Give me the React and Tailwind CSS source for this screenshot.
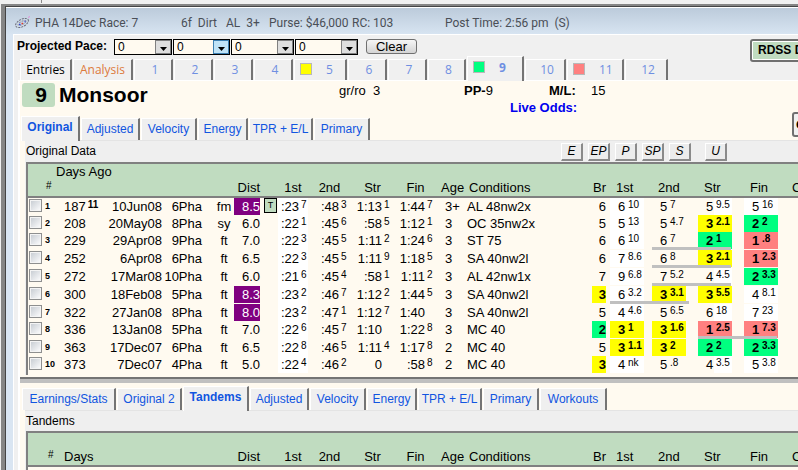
import { clsx } from 'clsx';

const raceTabs = [
  { label: 'Entries', width: 'w-[52px]', text: 'text-black' },
  { label: 'Analysis', width: 'w-[60px]', text: 'text-[#dd7a3c]' },
  { label: '1', width: 'w-[39px]' },
  { label: '2', width: 'w-[39px]' },
  { label: '3', width: 'w-[39px]' },
  { label: '4', width: 'w-[39px]' },
  { label: '5', width: 'w-[53px]', flag: 'bg-[#ffff00]' },
  { label: '6', width: 'w-[39px]' },
  { label: '7', width: 'w-[39px]' },
  { label: '8', width: 'w-[38px]' },
  { label: '9', width: 'w-[57px]', flag: 'bg-[#00ff80]', active: true },
  { label: '10', width: 'w-[41px]' },
  { label: '11', width: 'w-[57px]', flag: 'bg-[#ff8080]' },
  { label: '12', width: 'w-[43px]' }
];

const dataTabs = [
  { label: 'Original', width: 'w-[59px]', active: true },
  { label: 'Adjusted', width: 'w-[59px]' },
  { label: 'Velocity', width: 'w-[56px]' },
  { label: 'Energy', width: 'w-[50px]' },
  { label: 'TPR + E/L', width: 'w-[64px]' },
  { label: 'Primary', width: 'w-[56px]' }
];

const tandemTabs = [
  { label: 'Earnings/Stats', width: 'w-[94px]' },
  { label: 'Original 2', width: 'w-[65px]' },
  { label: 'Tandems', width: 'w-[66px]', active: true },
  { label: 'Adjusted', width: 'w-[59px]' },
  { label: 'Velocity', width: 'w-[56px]' },
  { label: 'Energy', width: 'w-[50px]' },
  { label: 'TPR + E/L', width: 'w-[64px]' },
  { label: 'Primary', width: 'w-[56px]' },
  { label: 'Workouts', width: 'w-[67px]' }
];

// times: [base, tenths]; calls: [position, lengths, colour]
const races = [
  { days: '187', sup: '11', date: '10Jun08', track: '6Pha', surf: 'fm', dist: '8.5', route: true, turf: true,
    times: [[':23', '7'], [':48', '3'], ['1:13', '1'], ['1:44', '7']], age: '3+', cond: 'AL 48nw2x',
    br: ['6'], calls: [['6', '10'], ['5', '7'], ['5', '9.5'], ['5', '16']] },
  { days: '208', date: '20May08', track: '8Pha', surf: 'sy', dist: '6.0', tight: true,
    times: [[':22', '1'], [':45', '6'], [':58', '5'], ['1:12', '1']], age: '3', cond: 'OC 35nw2x',
    br: ['5'], calls: [['5', '13'], ['5', '4.7'], ['3', '2.1', 'yellow'], ['2', '2', 'green']] },
  { days: '229', date: '29Apr08', track: '9Pha', surf: 'ft', dist: '7.0',
    times: [[':22', '3'], [':45', '5'], ['1:11', '2'], ['1:24', '6']], age: '3', cond: 'ST 75',
    br: ['6'], calls: [['6', '10'], ['6', '7'], ['2', '1', 'green'], ['1', '.8', 'red']], bar: 1 },
  { days: '252', date: '6Apr08', track: '6Pha', surf: 'ft', dist: '6.5',
    times: [[':22', '3'], [':45', '5'], ['1:11', '9'], ['1:18', '5']], age: '3', cond: 'SA 40nw2l',
    br: ['6'], calls: [['7', '8.6'], ['6', '8'], ['3', '2.1', 'yellow'], ['1', '2.3', 'red']], bar: 1 },
  { days: '272', date: '17Mar08', track: '10Pha', surf: 'ft', dist: '6.0',
    times: [[':21', '6'], [':45', '4'], [':58', '1'], ['1:11', '2']], age: '3', cond: 'AL 42nw1x',
    br: ['7'], calls: [['9', '6.8'], ['7', '5.2'], ['4', '4.5'], ['2', '3.3', 'green']], bar: 1 },
  { days: '300', date: '18Feb08', track: '5Pha', surf: 'ft', dist: '8.3', route: true,
    times: [[':23', '2'], [':46', '7'], ['1:12', '2'], ['1:44', '5']], age: '3', cond: 'SA 40nw2l',
    br: ['3', 'yellow'], calls: [['6', '3.2'], ['3', '3.1', 'yellow'], ['3', '5.5', 'yellow'], ['4', '8.1']], bar: 0 },
  { days: '322', date: '27Jan08', track: '8Pha', surf: 'ft', dist: '8.0', route: true, tight: true,
    times: [[':23', '2'], [':47', '1'], ['1:12', '7'], ['1:40', '']], age: '3', cond: 'SA 40nw2l',
    br: ['5'], calls: [['4', '4.6'], ['5', '6.5'], ['6', '18'], ['7', '23']] },
  { days: '336', date: '13Jan08', track: '5Pha', surf: 'ft', dist: '7.0',
    times: [[':22', '6'], [':45', '7'], ['1:10', ''], ['1:22', '8']], age: '3', cond: 'MC 40',
    br: ['2', 'green'], calls: [['3', '1', 'yellow'], ['3', '1.6', 'yellow'], ['1', '2.5', 'red'], ['1', '7.3', 'red']], bar: 2 },
  { days: '363', date: '17Dec07', track: '6Pha', surf: 'ft', dist: '6.5', tight: true,
    times: [[':22', '8'], [':46', '5'], ['1:11', '4'], ['1:17', '8']], age: '2', cond: 'MC 40',
    br: ['5'], calls: [['3', '1.1', 'yellow'], ['3', '2', 'yellow'], ['2', '2', 'green'], ['2', '3.3', 'green']] },
  { days: '373', date: '7Dec07', track: '4Pha', surf: 'ft', dist: '5.0', tight: true,
    times: [[':22', '4'], [':46', '2'], ['0', ''], [':58', '8']], age: '2', cond: 'MC 40',
    br: ['3', 'yellow'], calls: [['4', 'nk'], ['5', '.8'], ['4', '3.5'], ['5', '3.8']] }
];

const highlight = {
  yellow: 'bg-[#ffff00] font-bold',
  green: 'bg-[#00ff80] font-bold',
  red: 'bg-[#ff8080] font-bold'
};

const PaceSelect = ({ label, width, hot }) => (
  <span className={clsx('relative block h-4 shrink-0', width)}>
    <select
      aria-label={label}
      className="block h-4 w-full appearance-none border border-black bg-[#fffaf0] pl-[3px] text-[12px] leading-[14px] text-black"
    >
      <option>0</option>
    </select>
    <span
      className={clsx(
        'pointer-events-none absolute right-px top-px flex h-3.5 w-4 items-center justify-center border',
        hot ? 'border-[#3c7fb1] bg-[#bfe3f7]' : 'border-[#808080] bg-[#dedede]'
      )}
    >
      <svg width="7" height="4" viewBox="0 0 7 4" className="mt-1">
        <path d="M0 0h7L3.5 4z" fill="#000" />
      </svg>
    </span>
  </span>
);

const Tab = ({ tab }) => (
  <button
    type="button"
    className={clsx(
      'shrink-0 whitespace-nowrap border-l border-t border-r-2 border-l-white border-t-white border-r-[#747474] bg-[#efefef] text-center text-[12px] text-[#1155e0]',
      tab.width,
      tab.active ? 'relative h-[25px] pb-1 font-bold' : 'mb-px h-[22px]'
    )}
  >
    {tab.label}
  </button>
);

const RaceTab = ({ tab }) => (
  <button
    type="button"
    className={clsx(
      'flex shrink-0 items-center border-l border-t border-r-2 border-l-white border-t-white border-r-[#747474] bg-[#f0f0f0] font-["Open_Sans",sans-serif] text-[12px]',
      tab.width,
      tab.text || 'text-[#6f8fe2]',
      tab.flag && 'justify-start pl-[5px]',
      !tab.flag && 'justify-center',
      !tab.flag && !tab.text && 'pl-1',
      tab.active ? 'relative h-[25px] pb-1 font-bold' : 'mb-px h-[21px] pb-0.5'
    )}
  >
    {tab.flag && <span className={clsx('mr-3.5 h-3 w-3 border border-[#b8b8b8]', tab.flag)} />}
    {tab.label}
  </button>
);

const Columns = () => (
  <colgroup>
    <col className="w-4" />
    <col className="w-4" />
    <col className="w-12" />
    <col className="w-[54px]" />
    <col className="w-10" />
    <col className="w-8" />
    <col className="w-[26px]" />
    <col className="w-[18px]" />
    <col className="w-[30px]" />
    <col className="w-[43px]" />
    <col className="w-[43px]" />
    <col className="w-[43px]" />
    <col className="w-7" />
    <col className="w-[125px]" />
    <col className="w-[18px]" />
    <col className="w-[42px]" />
    <col className="w-[46px]" />
    <col className="w-[46px]" />
    <col className="w-[46px]" />
    <col />
  </colgroup>
);

const TableHead = ({ days, raised }) => (
  <thead>
    <tr className="h-[33px] border-b-2 border-[#808080] bg-[#c0dcc0] align-bottom leading-4 [&>th]:whitespace-nowrap [&>th]:font-normal">
      <th />
      <th className={clsx('pb-0.5 text-left text-[10px]', raised ? 'pl-0.5' : 'pl-1')}>#</th>
      <th className={clsx('text-left', raised ? 'align-top' : 'pl-1')}>
        <span className={clsx(raised && '-ml-1')}>{days}</span>
      </th>
      <th />
      <th />
      <th />
      <th className="text-right">Dist</th>
      <th />
      <th className="text-center">1st</th>
      <th className="text-center">2nd</th>
      <th className="text-center">Str</th>
      <th className="text-center">Fin</th>
      <th className="pl-1 text-left">Age</th>
      <th className="pl-1 text-left">Conditions</th>
      <th className="pr-0.5 text-right">Br</th>
      <th className="pl-2 text-left">1st</th>
      <th className="pl-2 text-left">2nd</th>
      <th className="pl-2 text-left">Str</th>
      <th className="pl-2 text-left">Fin</th>
      <th className="pl-1 text-left">C</th>
    </tr>
  </thead>
);

const TimeCell = ({ time, first }) => (
  <td className={clsx(first && 'bg-white')}>
    <div className="flex items-start">
      <span className={clsx('shrink-0 text-right', first ? 'w-[21px]' : 'w-[31px]')}>{time[0]}</span>
      <span className="ml-0.5 text-[10px] leading-[13px]">{time[1]}</span>
    </div>
  </td>
);

const CallCell = ({ call, index, bar }) => (
  <td className="relative pl-0.5">
    <div
      className={clsx(
        'flex h-[17px] w-[34px] items-start pl-2',
        call[2] ? highlight[call[2]] : (index === 0 || index === 3) && 'bg-white'
      )}
    >
      <span className="w-2 shrink-0">{call[0]}</span>
      <span
        className={clsx(
          'flex-1 self-stretch pl-0.5 text-[10px] leading-[13px]',
          index === 2 && !call[2] && 'bg-white'
        )}
      >
        {call[1]}
      </span>
    </div>
    {/* Gap bar between two calls */}
    {bar && <span className="absolute bottom-0 left-0.5 z-10 h-[3px] w-[79px] bg-[#c0c0c0]" />}
  </td>
);

const RaceRow = ({ race, number }) => (
  <tr className={clsx('[&>td]:whitespace-nowrap [&>td]:align-top', race.tight ? 'h-[17px]' : 'h-[18px]')}>
    <td className="pl-px pt-px">
      <input
        type="checkbox"
        aria-label={`Race ${number}`}
        className="block h-[13px] w-[13px] appearance-none border border-[#8e8f8f] bg-linear-to-br from-[#c4c9d0] to-white outline-1 -outline-offset-2 outline-[#f4f4f4]"
      />
    </td>
    <td className="pl-px text-[9px] font-bold">{number}</td>
    <td className="pl-1">
      <div className="flex items-start">
        {race.days}
        {race.sup && <span className="ml-0.5 text-[10px] font-bold leading-[13px]">{race.sup}</span>}
      </div>
    </td>
    <td className="text-right">{race.date}</td>
    <td>
      <div className="flex justify-end">{race.track}</div>
    </td>
    <td className="pl-3 text-center">{race.surf}</td>
    <td className="text-right">
      <div className={clsx('h-[17px]', race.route && 'bg-[#800080] text-white')}>{race.dist}</div>
    </td>
    <td>
      {race.turf && (
        <span className="ml-1 flex h-[15px] w-[13px] items-center justify-center border border-black bg-[#c0dcc0] text-[9px] leading-none">
          T
        </span>
      )}
    </td>
    {race.times.map((time, i) => (
      <TimeCell key={i} time={time} first={i === 0} />
    ))}
    <td className="pl-2">{race.age}</td>
    <td className="pl-0.5">{race.cond}</td>
    <td className="px-0.5">
      <div className={clsx('h-[17px] text-right', race.br[1] && highlight[race.br[1]])}>{race.br[0]}</div>
    </td>
    {race.calls.map((call, i) => (
      <CallCell key={i} call={call} index={i} bar={race.bar === i} />
    ))}
    <td />
  </tr>
);

const StyleButton = ({ children, spaced }) => (
  <button
    type="button"
    className={clsx(
      'h-[18px] w-[22px] border-b-2 border-l border-r-2 border-t border-b-[#8a8a8a] border-l-white border-r-[#8a8a8a] border-t-white bg-[#ececec] text-center text-[12px] italic leading-[14px]',
      spaced && 'ml-[9px]'
    )}
  >
    {children}
  </button>
);

const RaceIcon = () => (
  <svg width="15" height="14" viewBox="0 0 15 14" fill="none" className="shrink-0">
    <ellipse cx="7" cy="7" rx="7" ry="3.6" transform="rotate(-28 7 7)" stroke="#6b6b78" strokeDasharray="2 1" />
    <ellipse cx="7" cy="7" rx="4.4" ry="1.6" transform="rotate(-28 7 7)" stroke="#8d8d98" strokeDasharray="2 1" />
    <path d="M4 8.5h1.5M9.5 5.5h1" stroke="#3344dd" strokeWidth="1.5" />
    <path d="M6.5 7.5h1.5" stroke="#e03a2a" strokeWidth="1.5" />
    <path d="M13 1.5l2-1" stroke="#e58ad8" />
  </svg>
);

const App = () => {
  return (
    <div className="flex min-h-screen flex-col overflow-hidden bg-[#f0f0f0] font-['Liberation_Sans',Arial,sans-serif] text-[13px] leading-[17px] text-black">
      <div className="h-1 shrink-0 pl-[41px]">
        <div className="h-[3px] w-px bg-[#8a8a8a]" />
      </div>

      <div className="ml-px flex flex-1 flex-col border-l-4 border-t-2 border-[#858585]">
        <div className="flex flex-1 flex-col border-l border-t border-[#444] bg-[#d9e5f2]">
          {/* Title bar */}
          <header className="flex h-[27px] shrink-0 items-center whitespace-pre border-t border-white bg-linear-to-b from-[#bccbdb] to-[#d7e4f1] pl-[9px] pt-1 font-['Roboto',sans-serif] text-[12px] text-[#4a4f57]">
            <RaceIcon />
            <span className="ml-[5px] w-[146px]">PHA 14Dec Race: 7</span>
            <span className="w-[45px]">6f  Dirt</span>
            <span className="w-[43px]">AL  3+</span>
            <span className="w-[83px]">Purse: $46,000</span>
            <span className="w-[93px]">RC: 103</span>
            <span>Post Time: 2:56 pm  (S)</span>
          </header>

          <div className="ml-[7px] flex flex-1 flex-col border-l border-t border-white bg-[#f0f0f0]">
            <div className="flex">
              <div className="min-w-0 flex-1">
                <div className="flex h-[21px] items-center gap-px pl-[3px] pt-0.5">
                  <span className="w-24 text-[12px] font-bold">Projected Pace:</span>
                  <PaceSelect label="Projected pace 1" width="w-[58px]" />
                  <PaceSelect label="Projected pace 2" width="w-[57px]" hot />
                  <PaceSelect label="Projected pace 3" width="w-[63px]" />
                  <PaceSelect label="Projected pace 4" width="w-[63px]" />
                  <button
                    type="button"
                    className="ml-[7px] h-[15px] w-[51px] rounded-[3px] border border-[#707070] bg-linear-to-b from-[#f6f6f6] to-[#d4d4d4] leading-[13px]"
                  >
                    Clear
                  </button>
                </div>
                <nav className="relative -mb-px flex h-[25px] items-end gap-px pl-1.5">
                  {raceTabs.map((tab) => (
                    <RaceTab key={tab.label} tab={tab} />
                  ))}
                </nav>
              </div>
              <div className="w-12 shrink-0 pt-1">
                <button
                  type="button"
                  className="h-[23px] w-24 rounded-[3px] border-2 border-[#707070] bg-[#c0dcc0] pl-1.5 text-left text-[12px] font-bold leading-[19px] outline-1 -outline-offset-3 outline-white"
                >
                  RDSS D
                </button>
              </div>
            </div>

            <main className="ml-1 flex flex-1 flex-col border-l-2 border-t border-white bg-[#fffaf0]">
              <div className="flex pl-0.5">
                <div className="min-w-0 flex-1">
                  <div className="flex h-[35px] items-start">
                    <div className="flex w-[317px] shrink-0 items-center pt-0.5 text-[21px] font-bold leading-6">
                      <span className="w-[33px] rounded-[3px] bg-[#c0dcc0] pr-2 text-right">9</span>
                      <h1 className="ml-1">Monsoor</h1>
                    </div>
                    <div className="pt-px">
                      <div className="flex">
                        <span className="w-[34px]">gr/ro</span>
                        <span className="w-[91px]">3</span>
                        <span className="w-[85px]"><b>PP-</b>9</span>
                        <b className="w-[42px]">M/L:</b>
                        <span>15</span>
                      </div>
                      <div className="pl-[171px] font-bold text-[#0000ee]">Live Odds:</div>
                    </div>
                  </div>
                  <nav className="relative -mb-px -ml-px flex h-[25px] items-end gap-px">
                    {dataTabs.map((tab) => (
                      <Tab key={tab.label} tab={tab} />
                    ))}
                  </nav>
                </div>
                <div className="w-1.5 shrink-0 pt-[31px]">
                  <button
                    type="button"
                    className="h-[25px] w-16 rounded-[3px] border-2 border-[#707070] bg-[#f0f0f0] pl-0.5 text-left font-bold"
                  >
                    C
                  </button>
                </div>
              </div>

              <section className="ml-[5px] border-t border-[#e4e4e4] bg-[#efefef]">
                <div className="flex h-[21px] items-center pl-px">
                  <h2 className="w-[535px] shrink-0 text-[12px]">Original Data</h2>
                  <div className="flex gap-[5px]">
                    <StyleButton>E</StyleButton>
                    <StyleButton>EP</StyleButton>
                    <StyleButton>P</StyleButton>
                    <StyleButton>SP</StyleButton>
                    <StyleButton>S</StyleButton>
                    <StyleButton spaced>U</StyleButton>
                  </div>
                </div>
                <div className="ml-px overflow-hidden border-l-2 border-t-2 border-[#808080] bg-[#fffaf0] pb-0.5">
                  <table className="w-full min-w-[760px] table-fixed border-collapse">
                    <Columns />
                    <TableHead days="Days Ago" raised />
                    <tbody>
                      {races.map((race, i) => (
                        <RaceRow key={race.date} race={race} number={i + 1} />
                      ))}
                    </tbody>
                  </table>
                </div>
              </section>

              <div className="mt-0.5 h-1.5 shrink-0 border-t-2 border-[#747474] bg-[#c0c0c0]" />

              <nav className="relative -mb-px mt-0.5 flex h-[26px] shrink-0 items-end gap-px pl-0.5">
                {tandemTabs.map((tab) => (
                  <Tab key={tab.label} tab={tab} />
                ))}
              </nav>
              <section className="ml-[5px] flex flex-1 flex-col border-t border-[#e4e4e4] bg-[#efefef]">
                <h2 className="h-5 pl-px pt-0.5 text-[12px]">Tandems</h2>
                <div className="ml-px flex-1 overflow-hidden border-l-2 border-t-2 border-[#808080] bg-[#fffaf0]">
                  <table className="w-full min-w-[760px] table-fixed border-collapse">
                    <Columns />
                    <TableHead days="Days" />
                  </table>
                </div>
              </section>
            </main>
          </div>
        </div>
      </div>
    </div>
  );
};

export default App;
